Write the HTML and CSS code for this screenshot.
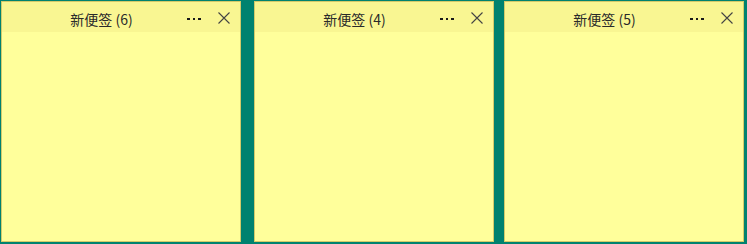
FILE: index.html
```html
<!DOCTYPE html>
<html lang="zh-CN">
<head>
<meta charset="utf-8">
<title>便签</title>
<link rel="stylesheet" href="styles.css">
</head>
<body>
<div class="desk">
  <div class="note note-first">
    <div class="bar">
      <div class="title">新便签 (6)</div>
      <div class="btns">
        <span class="btn"><span class="dots"><i></i><i></i><i></i></span></span>
        <span class="btn"><svg width="12" height="12" viewBox="0 0 12 12"><path d="M0.5 0.5 L11.5 11.5 M11.5 0.5 L0.5 11.5" stroke="#444" stroke-width="1.1" fill="none"/></svg></span>
      </div>
    </div>
    <div class="body"></div>
  </div>
  <div class="note note-second">
    <div class="bar">
      <div class="title">新便签 (4)</div>
      <div class="btns">
        <span class="btn"><span class="dots"><i></i><i></i><i></i></span></span>
        <span class="btn"><svg width="12" height="12" viewBox="0 0 12 12"><path d="M0.5 0.5 L11.5 11.5 M11.5 0.5 L0.5 11.5" stroke="#444" stroke-width="1.1" fill="none"/></svg></span>
      </div>
    </div>
    <div class="body"></div>
  </div>
  <div class="note">
    <div class="bar">
      <div class="title">新便签 (5)</div>
      <div class="btns">
        <span class="btn"><span class="dots"><i></i><i></i><i></i></span></span>
        <span class="btn"><svg width="12" height="12" viewBox="0 0 12 12"><path d="M0.5 0.5 L11.5 11.5 M11.5 0.5 L0.5 11.5" stroke="#444" stroke-width="1.1" fill="none"/></svg></span>
      </div>
    </div>
    <div class="body"></div>
  </div>
</div>
</body>
</html>
```
FILE: styles.css
```css
html, body {
  margin: 0;
  padding: 0;
  background: #00826f;
  width: 747px;
  height: 244px;
  overflow: hidden;
}
.desk {
  display: flex;
  padding: 1px 0 0 1px;
}
.note {
  box-sizing: border-box;
  width: 240px;
  height: 241px;
  border: 1px solid #d3ca6a;
  background: #ffff9b;
  display: flex;
  flex-direction: column;
}
.note-first { margin-right: 13px; }
.note-second { margin-right: 10px; }
.bar {
  height: 30px;
  background: #f9f692;
  display: flex;
  align-items: center;
  font-family: "Noto Sans CJK SC", "Noto Sans", sans-serif;
  font-size: 14px;
  color: #2a2a2a;
}
.title {
  flex: 1;
  text-align: center;
  padding-left: 22px;
  padding-top: 3px;
  line-height: 20px;
  white-space: nowrap;
}
.btns {
  display: flex;
  width: 61px;
  height: 30px;
}
.btn {
  width: 30px;
  display: flex;
  align-items: center;
  justify-content: center;
  padding-top: 2px;
}
.dots {
  display: flex;
  gap: 3px;
  padding-top: 2px;
}
.dots i {
  display: block;
  width: 2.5px;
  height: 2.5px;
  background: #1a1a1a;
}
.body {
  flex: 1;
}
```
